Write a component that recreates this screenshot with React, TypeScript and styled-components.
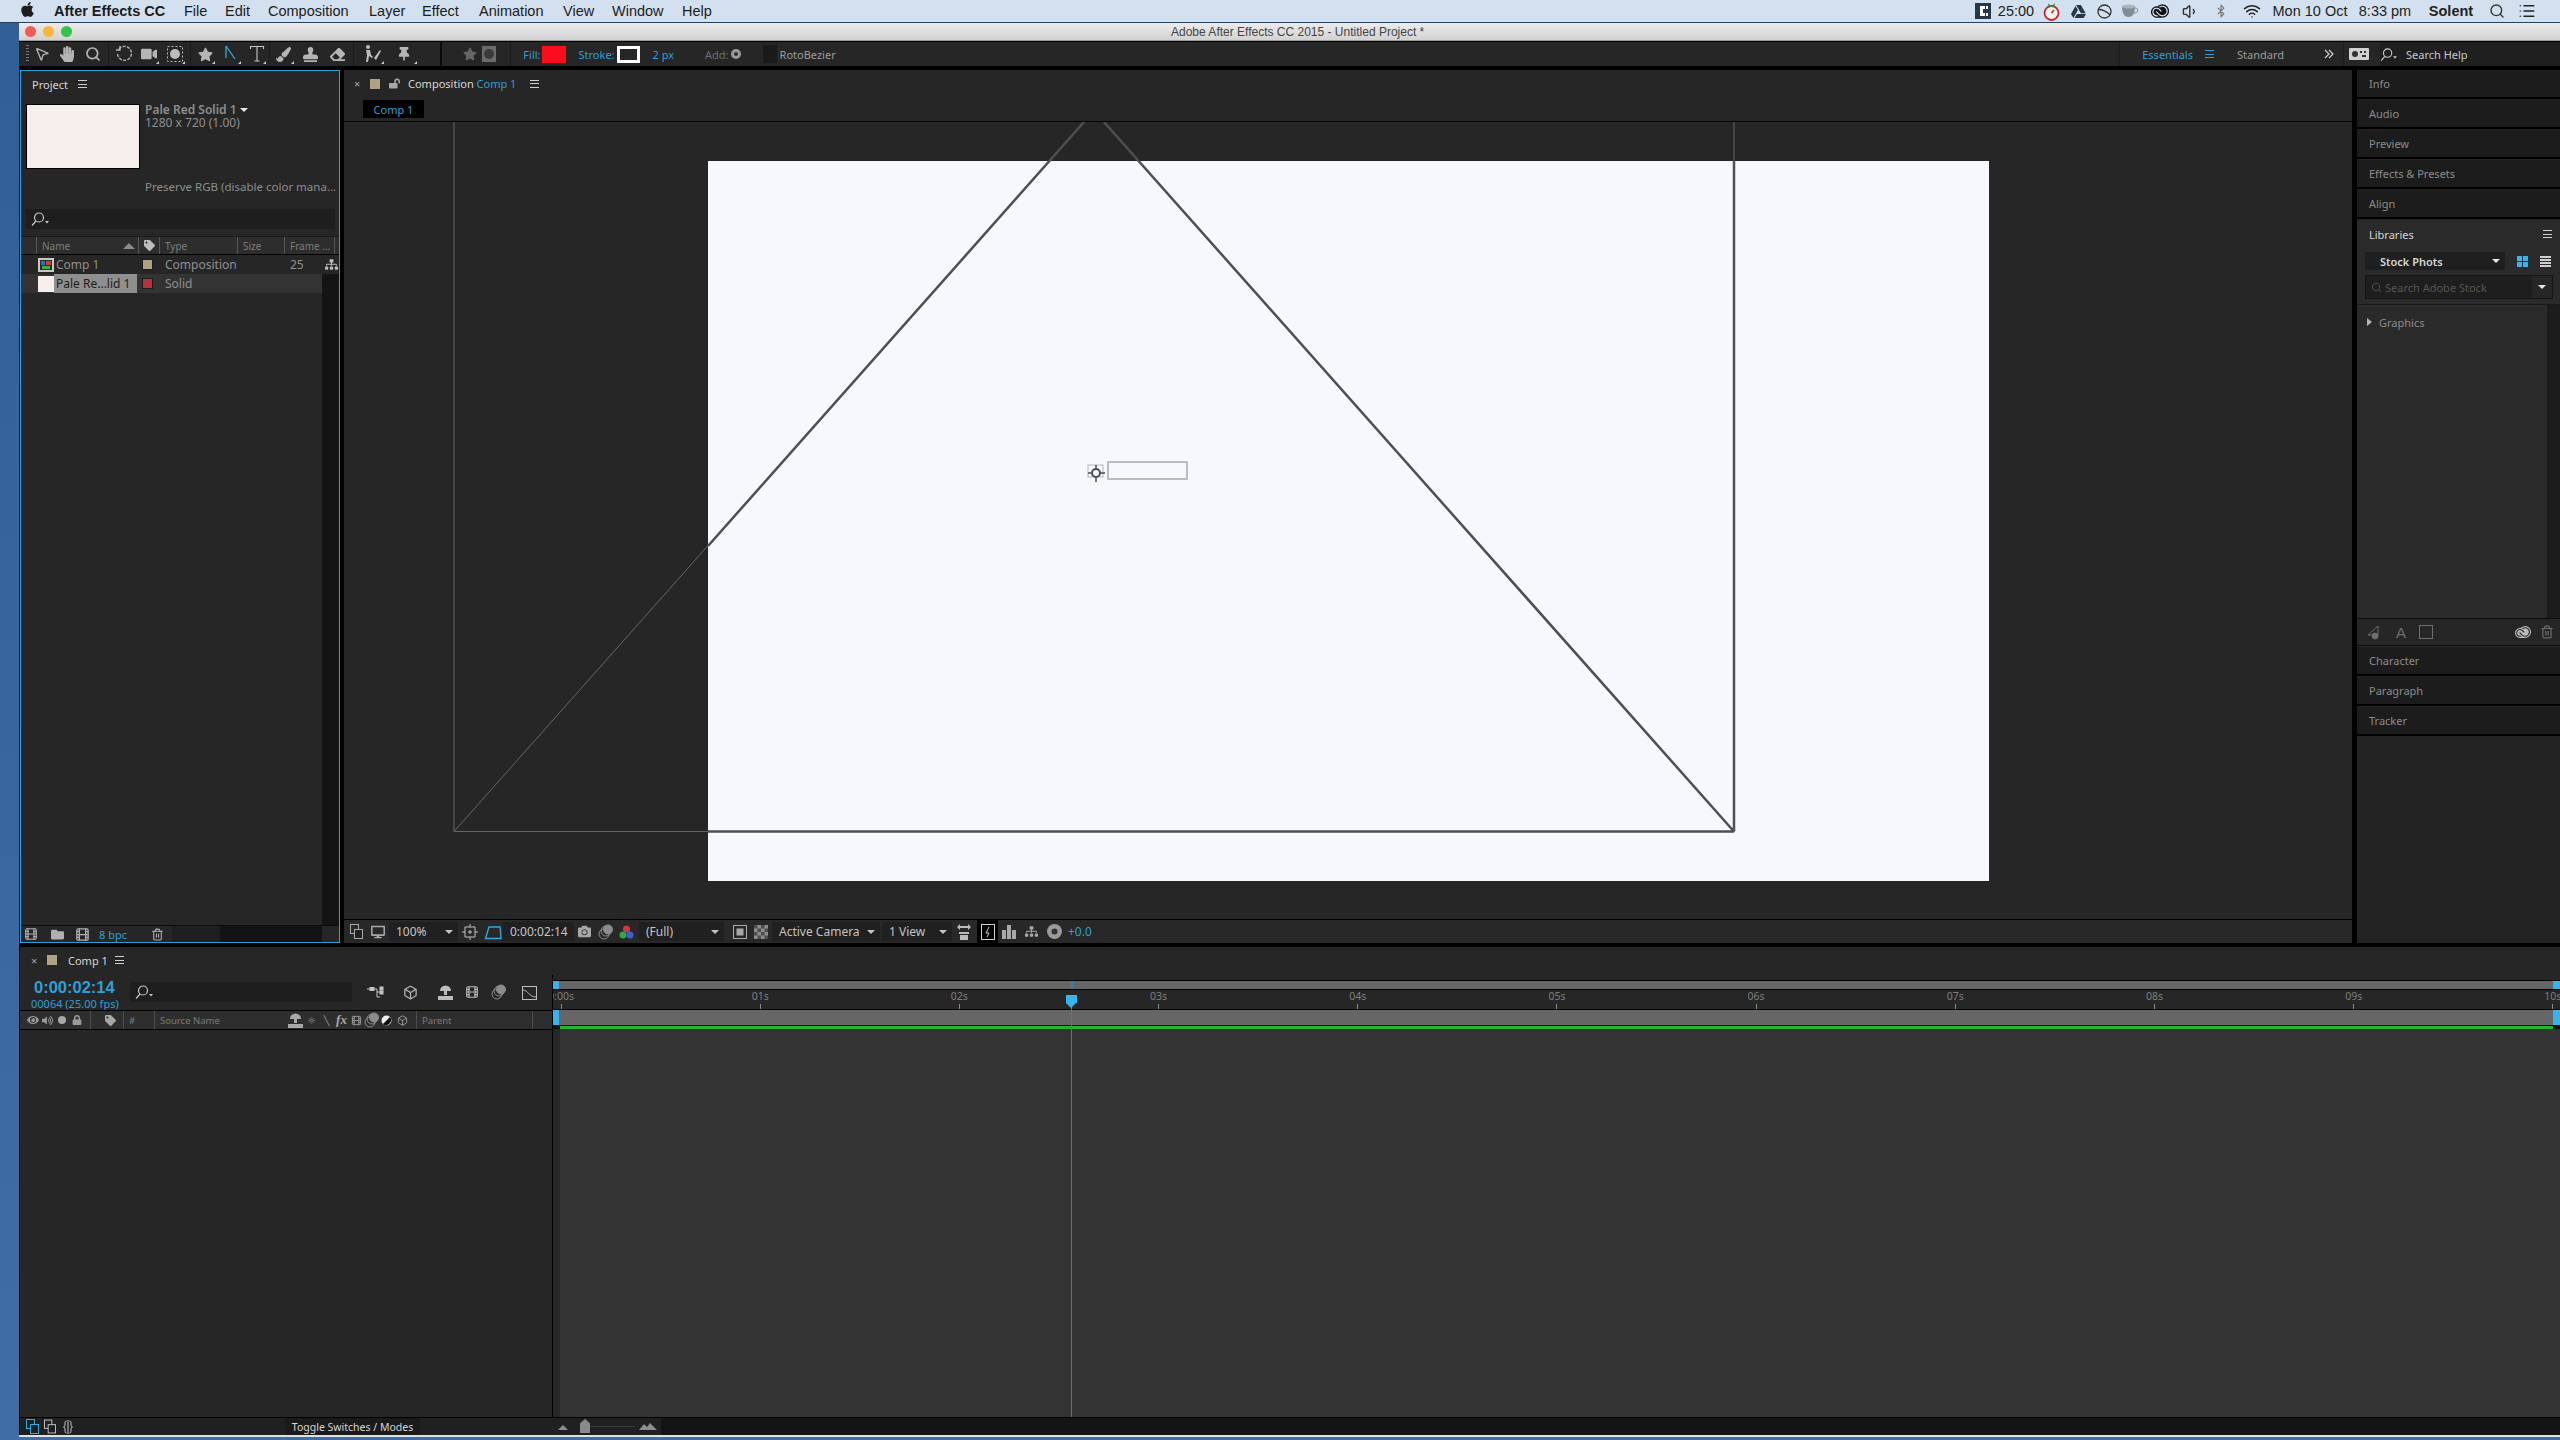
import React from 'react';
import styled, { createGlobalStyle } from 'styled-components';
import { Bluetooth, Box, Film, List, MousePointer2, Search, Trash2, Volume1, Wifi } from 'lucide-react';
import {
  FaApple,
  FaCamera,
  FaDesktop,
  FaEraser,
  FaEye,
  FaFolder,
  FaGoogleDrive,
  FaHandPaper,
  FaLock,
  FaLockOpen,
  FaPaintBrush,
  FaSitemap,
  FaStamp,
  FaStar,
  FaTag,
  FaThumbtack,
  FaVideo,
  FaVolumeUp,
} from 'react-icons/fa';
import { SiAdobecreativecloud } from 'react-icons/si';

const UI = '"Noto Sans", "DejaVu Sans", sans-serif';
const BLUE = '#2f9fd6';

const Global = createGlobalStyle`
  html, body { margin: 0; padding: 0; background: #3d6a9f; }
  * { box-sizing: border-box; }
  #root { width: 2560px; height: 1440px; overflow: hidden; }
`;

const Page = styled.div`
  width: 2560px;
  height: 1440px;
  background: linear-gradient(#2f5f96, #3f6ea6);
  display: flex;
  flex-direction: column;
  font-family: ${UI};
  font-size: 11px;
  color: #8f8f8f;
`;

/* ---- mac menu bar ---- */
const MenuBar = styled.div`
  height: 23px;
  flex: none;
  background: #d3e0ef;
  border-bottom: 1px solid #27415f;
  display: flex;
  align-items: center;
  padding: 0 14px 0 19px;
  font-family: 'Liberation Sans', sans-serif;
  font-size: 14.5px;
  color: #1c1c1c;
`;
const MenuItem = styled.span<{ $w: number; $bold?: boolean }>`
  width: ${(p) => p.$w}px;
  flex: none;
  font-weight: ${(p) => (p.$bold ? 700 : 400)};
  white-space: nowrap;
`;
const MenuSpacer = styled.div`
  flex: 1;
`;
const Extra = styled.span<{ $w: number; $bold?: boolean }>`
  width: ${(p) => p.$w}px;
  flex: none;
  display: flex;
  align-items: center;
  justify-content: center;
  white-space: nowrap;
  font-weight: ${(p) => (p.$bold ? 700 : 400)};
  color: #222;
`;

/* ---- app window ---- */
const AppWindow = styled.div`
  flex: none;
  height: 1414px;
  margin-left: 19px;
  background: #000;
  display: flex;
  flex-direction: column;
  border-bottom: 2px solid #dfe3e8;
`;
const TitleBar = styled.div`
  height: 18px;
  flex: none;
  background: linear-gradient(#ececec, #d2d2d2);
  border-bottom: 1px solid #9a9a9a;
  display: flex;
  align-items: center;
  padding-left: 6px;
  position: relative;
`;
const Light = styled.span<{ $c: string }>`
  width: 11px;
  height: 11px;
  border-radius: 50%;
  background: ${(p) => p.$c};
  margin-right: 7px;
  flex: none;
`;
const WindowTitle = styled.span`
  position: absolute;
  left: 1152px;
  top: 2px;
  font-size: 12px;
  color: #444;
  font-family: 'Liberation Sans', sans-serif;
  white-space: nowrap;
`;

/* ---- tools ---- */
const Toolbar = styled.div`
  height: 24px;
  flex: none;
  margin-top: 1px;
  background: #262626;
  display: flex;
  align-items: center;
  color: #b5b5b5;
`;
const Grip = styled.span`
  width: 3px;
  height: 18px;
  margin: 0 0 0 7px;
  flex: none;
  background: repeating-linear-gradient(#777 0 1px, #262626 1px 3px);
`;
const Tool = styled.span<{ $w?: number; $l?: number; $corner?: boolean; $c?: string }>`
  width: ${(p) => p.$w ?? 25.6}px;
  margin-left: ${(p) => p.$l ?? 0}px;
  height: 22px;
  flex: none;
  display: flex;
  align-items: center;
  justify-content: center;
  position: relative;
  color: ${(p) => p.$c ?? 'inherit'};
  &::after {
    content: '';
    display: ${(p) => (p.$corner ? 'block' : 'none')};
    position: absolute;
    right: 3px;
    bottom: 1px;
    border-left: 3px solid transparent;
    border-bottom: 3px solid #c9c9c9;
  }
`;
const ToolSep = styled.span<{ $ml?: number; $mr?: number; $w?: number; $c?: string }>`
  width: ${(p) => p.$w ?? 1}px;
  height: 100%;
  margin: 0 ${(p) => p.$mr ?? 2}px 0 ${(p) => p.$ml ?? 2}px;
  flex: none;
  background: ${(p) => p.$c ?? '#1b1b1b'};
`;
const Opt = styled.span<{ $l?: number; $c?: string }>`
  margin-left: ${(p) => p.$l ?? 0}px;
  color: ${(p) => p.$c ?? BLUE};
  flex: none;
  white-space: nowrap;
`;
const Swatch = styled.span<{ $l?: number; $w: number; $h: number; $c: string; $ring?: string }>`
  margin-left: ${(p) => p.$l ?? 0}px;
  width: ${(p) => p.$w}px;
  height: ${(p) => p.$h}px;
  flex: none;
  display: block;
  background: ${(p) => p.$c};
  border: ${(p) => (p.$ring ? `3px solid ${p.$ring}` : 'none')};
`;
const Spacer = styled.div`
  flex: 1;
`;
const HelpBox = styled.div`
  width: 180px;
  height: 100%;
  flex: none;
  margin-left: 6px;
  background: #1f1f1f;
  display: flex;
  align-items: center;
  padding-left: 0;
  color: #c9c9c9;
  gap: 9px;
`;

/* ---- main split ---- */
const MainRow = styled.div`
  height: 873px;
  flex: none;
  margin-top: 4px;
  display: flex;
  padding-left: 1px;
`;
const ProjectPanel = styled.section`
  width: 320px;
  flex: none;
  background: #262626;
  border: 1px solid ${BLUE};
  display: flex;
  flex-direction: column;
`;
const PanelHead = styled.div`
  height: 26px;
  flex: none;
  display: flex;
  align-items: center;
  padding-left: 11px;
  gap: 10px;
  color: #d6d6d6;
`;
const Burger = styled.span<{ $c?: string }>`
  width: 9px;
  height: 8px;
  flex: none;
  display: block;
  border-top: 1px solid ${(p) => p.$c ?? '#cfcfcf'};
  border-bottom: 1px solid ${(p) => p.$c ?? '#cfcfcf'};
  background: linear-gradient(${(p) => p.$c ?? '#cfcfcf'}, ${(p) => p.$c ?? '#cfcfcf'}) center / 100% 1px no-repeat;
`;
const ProjectInfo = styled.div`
  height: 112px;
  flex: none;
  padding: 7px 5px 0 5px;
  display: flex;
  gap: 5px;
`;
const Thumb = styled.div`
  width: 114px;
  height: 65px;
  flex: none;
  background: #f6eeec;
  border: 1px solid #000;
`;
const InfoText = styled.div`
  margin-top: -1px;
  display: flex;
  flex-direction: column;
  line-height: 13px;
  white-space: nowrap;
  color: #8e8e8e;
  font-size: 12px;
`;
const InfoName = styled.div`
  display: flex;
  align-items: center;
  gap: 3px;
  font-weight: 600;
  font-size: 12px;
`;
const DownTri = styled.span<{ $s?: number; $c?: string }>`
  flex: none;
  width: 0;
  height: 0;
  border-left: ${(p) => p.$s ?? 4}px solid transparent;
  border-right: ${(p) => p.$s ?? 4}px solid transparent;
  border-top: ${(p) => p.$s ?? 4}px solid ${(p) => p.$c ?? '#e8e8e8'};
`;
const InfoNote = styled.div`
  margin-top: 51px;
  font-size: 11.5px;
`;
const SearchField = styled.div`
  height: 20px;
  margin: 0 4px 0 5px;
  flex: none;
  background: #1e1e1e;
  display: flex;
  align-items: center;
  padding-left: 5px;
  color: #c9c9c9;
`;
const ProjectHeader = styled.div`
  margin-top: 7px;
  height: 19px;
  flex: none;
  background: #2d2d2d;
  border-top: 1px solid #1a1a1a;
  border-bottom: 1px solid #000;
  display: grid;
  grid-template-columns: 15px 102px 21px 78px 47px 50px 1fr;
  align-items: center;
  font-size: 10px;
  color: #7d7d7d;
`;
const HeadCell = styled.span<{ $sep?: boolean }>`
  height: 100%;
  padding-left: 5px;
  display: flex;
  align-items: center;
  justify-content: space-between;
  white-space: nowrap;
  border-left: ${(p) => (p.$sep ? '1px solid #565656' : 'none')};
`;
const UpTri = styled.span`
  width: 0;
  height: 0;
  margin-right: 3px;
  border-left: 6px solid transparent;
  border-right: 6px solid transparent;
  border-bottom: 6px solid #8a8a8a;
`;
const ProjectRow = styled.div<{ $sel?: boolean }>`
  height: 19px;
  flex: none;
  display: grid;
  grid-template-columns: 16px 17px 86px 25px 125px 33px 17px;
  align-items: center;
  font-size: 12px;
  color: #8f8f8f;
  background: linear-gradient(90deg, ${(p) => (p.$sel ? '#333' : '#262626')} 301px, ${(p) => (p.$sel ? '#141414' : '#262626')} 301px);
`;
const RowName = styled.span<{ $sel?: boolean }>`
  height: 100%;
  padding-left: 2px;
  margin-right: 3px;
  display: flex;
  align-items: center;
  white-space: nowrap;
  background: ${(p) => (p.$sel ? '#8f8f8f' : 'transparent')};
  color: ${(p) => (p.$sel ? '#1c1c1c' : '#8f8f8f')};
`;
const RowIcon = styled.span`
  display: flex;
  align-items: center;
  justify-content: center;
`;
const LabelChip = styled.span<{ $c: string }>`
  width: 11px;
  height: 11px;
  display: block;
  margin-left: 2px;
  background: ${(p) => p.$c};
  border: 1px solid #1c1c1c;
`;
const ProjectFill = styled.div`
  flex: 1;
  background: linear-gradient(90deg, #262626 301px, #141414 301px);
`;
const ProjectFoot = styled.div`
  height: 17px;
  flex: none;
  display: flex;
  align-items: center;
  border-top: 1px solid #0c0c0c;
  background: linear-gradient(90deg, #262626 151px, #1f1f1f 151px, #1f1f1f 199px, #131313 199px, #131313 301px, #262626 301px);
  color: #b0b0b0;
`;
const FootTool = styled.span<{ $w: number; $l?: number }>`
  width: ${(p) => p.$w}px;
  margin-left: ${(p) => p.$l ?? 0}px;
  flex: none;
  display: flex;
  align-items: center;
  justify-content: center;
`;

/* ---- composition viewer ---- */
const CompPanel = styled.section`
  flex: 1;
  margin-left: 4px;
  background: #262626;
  display: flex;
  flex-direction: column;
  min-width: 0;
`;
const CompHead = styled.div`
  height: 27px;
  flex: none;
  display: flex;
  align-items: center;
  padding-left: 10px;
  color: #d6d6d6;
`;
const CloseX = styled.span`
  width: 16px;
  flex: none;
  color: #a8a8a8;
  font-size: 11px;
`;
const TabSwatch = styled.span`
  width: 10px;
  height: 10px;
  flex: none;
  background: #b0a284;
`;
const TabRow = styled.div`
  height: 25px;
  flex: none;
  padding-left: 19px;
  border-bottom: 1px solid #000;
  display: flex;
  align-items: flex-start;
  padding-top: 3px;
`;
const ActiveTab = styled.span`
  width: 61px;
  height: 18px;
  background: #000;
  color: ${BLUE};
  display: flex;
  align-items: center;
  justify-content: center;
`;
const Viewer = styled.div`
  height: 797px;
  flex: none;
  position: relative;
  overflow: hidden;
`;
const CompCanvas = styled.div`
  position: absolute;
  left: 364px;
  top: 39px;
  width: 1281px;
  height: 720px;
  background: #f6f8fd;
`;
const Overlay = styled.svg`
  position: absolute;
  left: 0;
  top: 0;
`;
const TextBox = styled.div`
  position: absolute;
  left: 763px;
  top: 339px;
  width: 81px;
  height: 19px;
  border: 2px solid #b9bcc0;
  border-radius: 1px;
`;
const CursorMark = styled.svg`
  position: absolute;
  left: 743px;
  top: 342px;
`;
const ViewerFoot = styled.div`
  flex: 1;
  border-top: 1px solid #000;
  display: flex;
  align-items: center;
  color: #a8a8a8;
  padding-left: 0;
  background: #282828;
  font-size: 12px;
`;
const FootBox = styled.span<{ $w: number; $l?: number }>`
  width: ${(p) => p.$w}px;
  margin-left: ${(p) => p.$l ?? 0}px;
  height: 19px;
  flex: none;
  display: flex;
  align-items: center;
  justify-content: space-between;
  padding: 0 5px 0 7px;
  background: #202020;
  color: #c4c4c4;
  white-space: nowrap;
`;
const FootIcon = styled.span<{ $w: number; $l?: number; $black?: boolean }>`
  width: ${(p) => p.$w}px;
  margin-left: ${(p) => p.$l ?? 0}px;
  height: 100%;
  flex: none;
  display: flex;
  align-items: center;
  justify-content: center;
  background: ${(p) => (p.$black ? '#000' : 'transparent')};
`;

/* ---- right column ---- */
const RightCol = styled.aside`
  width: 203px;
  flex: none;
  margin-left: 5px;
  background: #232323;
  display: flex;
  flex-direction: column;
`;
const Collapsed = styled.div`
  height: 27px;
  margin-bottom: 3px;
  flex: none;
  background: #1c1c1c;
  display: flex;
  align-items: center;
  padding-left: 12px;
  color: #8c8c8c;
  box-shadow: 0 2px 0 #000;
`;
const Libraries = styled.div`
  height: 427px;
  flex: none;
  background: #2a2a2a;
  display: flex;
  flex-direction: column;
`;
const LibHead = styled.div`
  height: 28px;
  flex: none;
  display: flex;
  align-items: center;
  justify-content: space-between;
  padding: 0 8px 0 12px;
  color: #d6d6d6;
`;
const LibSelectRow = styled.div`
  height: 18px;
  margin-top: 4px;
  flex: none;
  display: flex;
  align-items: center;
  padding-left: 8px;
`;
const LibSelect = styled.div`
  width: 140px;
  height: 18px;
  flex: none;
  background: #1f1f1f;
  display: flex;
  align-items: center;
  justify-content: space-between;
  padding: 0 5px 0 15px;
  color: #d8d8d8;
  font-weight: 600;
`;
const GridIcon = styled.span`
  width: 11px;
  height: 11px;
  margin-left: 12px;
  flex: none;
  background:
    linear-gradient(#2a2a2a, #2a2a2a) center / 100% 1px no-repeat,
    linear-gradient(#2a2a2a, #2a2a2a) center / 1px 100% no-repeat,
    #35b4ee;
`;
const LinesIcon = styled.span`
  width: 11px;
  height: 11px;
  margin-left: 12px;
  flex: none;
  background: repeating-linear-gradient(#cfcfcf 0 2px, #2a2a2a 2px 3px);
`;
const StockSearch = styled.div`
  height: 24px;
  margin: 5px 7px 0 8px;
  flex: none;
  background: #1e1e1e;
  border: 1px solid #161616;
  display: flex;
  align-items: center;
  padding-left: 5px;
  gap: 3px;
  color: #555;
`;
const StockArrow = styled.span`
  width: 20px;
  height: 100%;
  margin-left: auto;
  flex: none;
  background: #262626;
  display: flex;
  align-items: center;
  justify-content: center;
`;
const LibBody = styled.div`
  flex: 1;
  margin-top: 5px;
  border-top: 1px solid #191919;
  background: linear-gradient(90deg, #2a2a2a 190px, #1c1c1c 190px);
  padding: 10px 0 0 10px;
  display: flex;
  align-items: flex-start;
  gap: 7px;
  color: #8c8c8c;
`;
const RightTri = styled.span`
  margin-top: 3px;
  width: 0;
  height: 0;
  border-top: 4px solid transparent;
  border-bottom: 4px solid transparent;
  border-left: 5px solid #b5b5b5;
`;
const LibFoot = styled.div`
  height: 28px;
  margin-bottom: 1px;
  flex: none;
  border-top: 1px solid #0d0d0d;
  border-bottom: 1px solid #0d0d0d;
  background: #262626;
  display: flex;
  align-items: center;
  padding-left: 10px;
  color: #6f6f6f;
  gap: 13px;
`;
const LibGlyphA = styled.span`
  font-family: 'Liberation Sans', sans-serif;
  font-size: 15px;
`;
const LibFootRight = styled.span`
  margin-left: auto;
  display: flex;
  align-items: center;
  gap: 9px;
  padding-right: 6px;
  color: #bdbdbd;
`;

/* ---- timeline ---- */
const Timeline = styled.section`
  margin-top: 4px;
  margin-left: 1px;
  height: 488px;
  flex: none;
  background: #262626;
  position: relative;
  display: flex;
  flex-direction: column;
  overflow: hidden;
`;
const TimelineTab = styled.div`
  height: 28px;
  flex: none;
  display: flex;
  align-items: center;
  padding: 0 0 2px 11px;
  color: #d6d6d6;
`;
const TimelineBody = styled.div`
  flex: 1;
  display: grid;
  grid-template-columns: 533px 1fr;
  min-height: 0;
`;
const LeftPane = styled.div`
  display: flex;
  flex-direction: column;
  border-right: 1px solid #000;
`;
const ControlRow = styled.div`
  height: 35px;
  flex: none;
  display: flex;
  align-items: flex-start;
`;
const TimeBlock = styled.div`
  width: 110px;
  flex: none;
  padding: 4px 0 0 11px;
  color: ${BLUE};
  line-height: 1;
  white-space: nowrap;
`;
const TimeCode = styled.div`
  font-size: 16.5px;
  font-weight: 700;
  font-family: 'Liberation Sans', sans-serif;
  padding-left: 3px;
`;
const Frames = styled.div`
  font-size: 11px;
  margin-top: 2px;
`;
const TimelineSearch = styled(SearchField)`
  width: 222px;
  margin: 7px 0 0 0;
`;
const CtlIcons = styled.div`
  display: flex;
  margin-left: 8px;
  margin-top: 7px;
  height: 20px;
  align-items: center;
  color: #b5b5b5;
`;
const LayerHeader = styled.div`
  height: 20px;
  flex: none;
  display: flex;
  align-items: center;
  background: #2e2e2e;
  border-top: 1px solid #000;
  border-bottom: 1px solid #000;
  font-size: 9.5px;
  color: #7a7a7a;
`;
const HIcon = styled.span<{ $w: number; $l?: number; $c?: string }>`
  width: ${(p) => p.$w}px;
  margin-left: ${(p) => p.$l ?? 0}px;
  flex: none;
  display: flex;
  align-items: center;
  justify-content: center;
  color: ${(p) => p.$c ?? '#9a9a9a'};
`;
const HLabel = styled.span<{ $w: number; $pad?: number }>`
  width: ${(p) => p.$w}px;
  height: 100%;
  flex: none;
  display: flex;
  align-items: center;
  padding-left: ${(p) => p.$pad ?? 5}px;
  border-left: 1px solid #4d4d4d;
  white-space: nowrap;
`;
const FxMark = styled.span`
  font-family: 'Liberation Serif', serif;
  font-style: italic;
  font-weight: 700;
  font-size: 13px;
  color: #a8a8a8;
`;
const LayerPad = styled.div`
  flex: 1;
`;
const RightPane = styled.div`
  display: flex;
  flex-direction: column;
  position: relative;
  min-width: 0;
`;
const WorkBar = styled.div`
  height: 10px;
  margin-top: 5px;
  flex: none;
  background: linear-gradient(90deg, #35b4ee 0 6px, #666 6px, #666 calc(100% - 7px), #35b4ee calc(100% - 7px));
  border-top: 1px solid #000;
  border-bottom: 1px solid #000;
`;
const Ruler = styled.div`
  height: 19px;
  flex: none;
  padding: 0 7px 0 8px;
  display: flex;
  justify-content: space-between;
  overflow: hidden;
  color: #7f7f7f;
  font-size: 10.5px;
`;
const Tick = styled.span`
  width: 0;
  height: 100%;
  flex: none;
  display: flex;
  flex-direction: column;
  align-items: center;
  justify-content: space-between;
  white-space: nowrap;
  line-height: 13px;
  &::after {
    content: '';
    width: 1px;
    height: 5px;
    flex: none;
    background: #8a8a8a;
  }
`;
const LayerBar = styled.div`
  height: 20px;
  flex: none;
  border-top: 1px solid #000;
  background:
    linear-gradient(#1fb62f, #1fb62f) 7px 100% / calc(100% - 14px) 3px no-repeat,
    linear-gradient(#35b4ee, #35b4ee) 0 0 / 6px 15px no-repeat,
    linear-gradient(#35b4ee, #35b4ee) 100% 0 / 7px 15px no-repeat,
    linear-gradient(#666, #666) 0 0 / 100% 15px no-repeat,
    #111;
`;
const TrackArea = styled.div`
  flex: 1;
  margin-left: 7px;
  background: #333;
`;
const Playhead = styled.div`
  position: absolute;
  left: 518px;
  top: 20px;
  bottom: 0;
  width: 1px;
  background: #2b86b8;
  &::before {
    content: '';
    position: absolute;
    left: -5px;
    top: 0;
    width: 11px;
    height: 8px;
    background: #35b4ee;
  }
  &::after {
    content: '';
    position: absolute;
    left: -5px;
    top: 8px;
    border-left: 5.5px solid transparent;
    border-right: 5.5px solid transparent;
    border-top: 5px solid #35b4ee;
  }
`;
const WorkTick = styled.div`
  position: absolute;
  left: 518px;
  top: 6px;
  width: 2px;
  height: 8px;
  background: #2b86b8;
`;
const TimelineFoot = styled.div`
  height: 18px;
  flex: none;
  border-top: 1px solid #000;
  background: #202020;
  display: flex;
  align-items: center;
  color: #c9c9c9;
`;
const ToggleLabel = styled.span`
  width: 135px;
  height: 100%;
  margin-left: 205px;
  flex: none;
  background: #1a1a1a;
  color: #d6d6d6;
  display: flex;
  align-items: center;
  justify-content: center;
  white-space: nowrap;
  font-size: 10.5px;
`;
const ZoomTrack = styled.span`
  width: 55px;
  height: 1px;
  margin-left: 7px;
  flex: none;
  background: #3a3a3a;
  position: relative;
`;
const ZoomKnob = styled.span`
  position: absolute;
  left: 0;
  top: -7px;
  width: 10px;
  height: 14px;
  background: #8a8a8a;
  clip-path: polygon(50% 0, 100% 30%, 100% 100%, 0 100%, 0 30%);
`;
const MountainFill = styled.span`
  flex: 1;
  height: 100%;
  background: #141414;
`;

/* ---- drawn icons ---- */
const Pen = () => (
  <svg width="14" height="18" viewBox="0 0 14 18" fill="none" stroke="#35a9e0" strokeWidth="1.3">
    <path d="M2 1v12M2 1l9 13" />
  </svg>
);
const RotateTool = () => (
  <svg width="18" height="18" viewBox="0 0 18 18" fill="none" stroke="#bcbcbc" strokeWidth="1.3">
    <path d="M4 4a7 7 0 1 1-1.5 5" strokeDasharray="3 1.4" />
    <path d="M5 1v4H1" />
  </svg>
);
const PanBehind = () => (
  <svg width="18" height="18" viewBox="0 0 18 18" fill="none" stroke="#bcbcbc">
    <rect x="1.5" y="1.5" width="15" height="15" strokeDasharray="2 2" />
    <circle cx="9" cy="9" r="5" fill="#bcbcbc" stroke="none" />
  </svg>
);
const TypeTool = () => (
  <svg width="16" height="18" viewBox="0 0 16 18" fill="none" stroke="#c6c6c6" strokeWidth="1.1">
    <path d="M1.5 4V1.5h13V4M8 1.5V16M5.5 16h5" />
  </svg>
);
const RotoTool = () => (
  <svg width="20" height="20" viewBox="0 0 20 20" fill="#bdbdbd">
    <circle cx="6" cy="3" r="2" />
    <path d="M4 6h4l1 5 2 2-1 1-3-2-1 6H4l1-7zM12 14l6-8 1 1-5 9z" />
  </svg>
);
const StarGrid = () => (
  <svg width="14" height="16" viewBox="0 0 14 16">
    <rect width="14" height="16" fill="#6b6b6b" />
    <circle cx="7" cy="8" r="5" fill="#3a3a3a" />
  </svg>
);
const RgbDots = () => (
  <svg width="15" height="14" viewBox="0 0 15 14">
    <circle cx="7.5" cy="4" r="3.5" fill="#d13a3a" />
    <circle cx="4" cy="10" r="3.5" fill="#2fa84a" />
    <circle cx="11" cy="10" r="3.5" fill="#3a62d8" />
  </svg>
);
const Checker = () => (
  <svg width="14" height="14" viewBox="0 0 14 14">
    <rect width="14" height="14" fill="#8c8c8c" />
    <path d="M0 0h3.5v3.5H0zM7 0h3.5v3.5H7zM3.5 3.5H7V7H3.5zM10.5 3.5H14V7h-3.5zM0 7h3.5v3.5H0zM7 7h3.5v3.5H7zM3.5 10.5H7V14H3.5zM10.5 10.5H14V14h-3.5z" fill="#4e4e4e" />
  </svg>
);
const OutlineSquare = ({ s = 14, c = '#a8a8a8', inner }: { s?: number; c?: string; inner?: boolean }) => (
  <svg width={s} height={s} viewBox="0 0 14 14" fill="none" stroke={c}>
    <rect x="0.5" y="0.5" width="13" height="13" />
    {inner && <rect x="4" y="4" width="6" height="6" fill={c} />}
  </svg>
);
const DashedFrame = ({ c = '#c2c2c2' }: { c?: string }) => (
  <svg width="16" height="16" viewBox="0 0 16 16" fill="none" stroke={c}>
    <path d="M3 3h10v10H3z" />
    <path d="M8 0v3M8 13v3M0 8h3M13 8h3M6 8h4M8 6v4" />
  </svg>
);
const Mask = () => (
  <svg width="18" height="16" viewBox="0 0 18 16" fill="none" stroke="#35a9e0" strokeWidth="1.3">
    <path d="M1.5 14.5 5 3h11l1 11.5z" />
  </svg>
);
const Aperture = ({ s = 15 }: { s?: number }) => (
  <svg width={s} height={s} viewBox="0 0 15 15">
    <circle cx="7.5" cy="7.5" r="7.5" fill="#9a9a9a" />
    <circle cx="7.5" cy="7.5" r="3" fill="#333" />
  </svg>
);
const Lightning = () => (
  <svg width="14" height="16" viewBox="0 0 14 16" fill="none" stroke="#cfcfcf">
    <rect x="0.5" y="0.5" width="13" height="15" />
    <path d="M8 3 5 9h3l-2 4" />
  </svg>
);
const ExposureBars = () => (
  <svg width="14" height="14" viewBox="0 0 14 14" fill="#a8a8a8">
    <path d="M0 5h4v9H0zM5 0h4v14H5zM10 5h4v9h-4z" />
  </svg>
);
const FitArrows = () => (
  <svg width="14" height="16" viewBox="0 0 14 16" fill="#bcbcbc">
    <path d="M0 3 3 0v2h8V0l3 3-3 3V4H3v2zM2 8h10v2H2zM3 11h8v5H3z" />
  </svg>
);
const CompIcon = () => (
  <svg width="16" height="14" viewBox="0 0 16 14">
    <rect width="16" height="14" fill="#c7c7c7" />
    <rect x="2" y="2" width="12" height="10" fill="#2b2b2b" />
    <rect x="3" y="3" width="4" height="4" fill="#2b6fc4" />
    <rect x="8" y="3" width="5" height="4" fill="#c4472b" />
    <rect x="4" y="8" width="8" height="3" fill="#3cae4a" />
  </svg>
);
const LensMag = ({ s = 14, c = '#c9c9c9' }: { s?: number; c?: string }) => (
  <svg width={s + 4} height={s} viewBox="0 0 18 14" fill="none" stroke={c} strokeWidth="1.2">
    <circle cx="8" cy="5.5" r="4.5" />
    <path d="M5 9 1 13.5" />
    <path d="M14 9h4l-2 2.5z" fill={c} stroke="none" />
  </svg>
);
const Tomato = () => (
  <svg width="17" height="19" viewBox="0 0 17 19" fill="none">
    <circle cx="8.5" cy="11" r="7" stroke="#c8262c" strokeWidth="1.8" fill="#f2f2f2" />
    <path d="M8.5 11 11 8" stroke="#c8262c" strokeWidth="1.5" />
    <path d="M5 1.5 8.5 4 12 1l-1 4H6z" fill="#2c8a3c" />
  </svg>
);
const CIcon = () => (
  <svg width="16" height="16" viewBox="0 0 16 16">
    <rect width="16" height="16" fill="#26374a" />
    <path d="M10 3H5v10h5v-3H8V6h2zM11 3h2v3h-2zM11 10h2v3h-2z" fill="#fff" />
  </svg>
);
const RingCircle = () => (
  <svg width="15" height="15" viewBox="0 0 15 15" fill="none" stroke="#333">
    <circle cx="7.5" cy="7.5" r="6.5" strokeWidth="1.3" />
    <path d="M1.5 5.5c4 0 8 2 12 5.5" strokeWidth="1.3" />
  </svg>
);
const Cup = () => (
  <svg width="19" height="14" viewBox="0 0 19 14">
    <path d="M1 2h13c0 7-2 11-6.5 11S1 9 1 2z" fill="#808b96" />
    <ellipse cx="7.5" cy="2.5" rx="6.5" ry="2" fill="#abb5bf" />
    <path d="M14 4c4 0 4 5-1 5" fill="none" stroke="#808b96" />
  </svg>
);
const ShapeTriangle = () => (
  <svg width="16" height="15" viewBox="0 0 16 15" fill="none" stroke="#6f6f6f">
    <path d="M1 10 11 1v9z" />
    <circle cx="8" cy="11" r="3" fill="#6f6f6f" />
  </svg>
);
const Layers = ({ c = '#35a9e0' }: { c?: string }) => (
  <svg width="13" height="15" viewBox="0 0 13 15" fill="none" stroke={c}>
    <rect x="0.5" y="0.5" width="8" height="9" />
    <rect x="4.5" y="5.5" width="8" height="9" fill="#202020" />
  </svg>
);
const FlowIcon = () => (
  <svg width="17" height="13" viewBox="0 0 17 13" fill="none" stroke="#c4c4c4">
    <path d="M0 3h7M7 3h3v8h3M10 6h3" />
    <rect x="3" y="1.5" width="4" height="3" fill="#c4c4c4" />
    <rect x="13" y="1" width="3" height="3" fill="#c4c4c4" />
    <rect x="13" y="5" width="3" height="3" fill="#c4c4c4" />
  </svg>
);
const Shy = ({ s = 15, c = '#a8a8a8' }: { s?: number; c?: string }) => (
  <svg width={s} height={s} viewBox="0 0 15 15" fill={c}>
    <path d="M2 6a5.5 5.5 0 0 1 11 0H9v4H6V6zM0 11h15v4H0z" />
  </svg>
);
const Curve = () => (
  <svg width="15" height="15" viewBox="0 0 15 15" fill="none" stroke="#bcbcbc">
    <rect x="0.5" y="1.5" width="14" height="13" />
    <path d="M1 5c5 0 6 7 13 7" />
  </svg>
);
const Spheres = () => (
  <svg width="15" height="16" viewBox="0 0 15 16" fill="none" stroke="#8c8c8c">
    <circle cx="6" cy="10" r="5" />
    <circle cx="8" cy="7" r="5" />
    <circle cx="10" cy="5.5" r="4.5" fill="#8c8c8c" />
  </svg>
);
const ContrastCircle = () => (
  <svg width="11" height="11" viewBox="0 0 11 11">
    <circle cx="5.5" cy="5.5" r="5" fill="#eee" />
    <path d="M9 2a5 5 0 0 1-7 7z" fill="#111" />
  </svg>
);
const SoloDot = () => (
  <svg width="8" height="8" viewBox="0 0 8 8">
    <circle cx="4" cy="4" r="4" fill="#a8a8a8" />
  </svg>
);
const Keyboard = () => (
  <svg width="20" height="12" viewBox="0 0 20 12">
    <rect width="20" height="12" rx="1" fill="#d0d0d0" />
    <circle cx="6" cy="6" r="3" fill="#333" />
    <path d="M11 3h2v2h-2zM15 3h2v2h-2zM13 7h4v2h-4z" fill="#333" />
  </svg>
);
const DoubleChevron = () => (
  <svg width="10" height="10" viewBox="0 0 10 10" fill="none" stroke="#d0d0d0" strokeWidth="1.2">
    <path d="M1 1l4 4-4 4M5 1l4 4-4 4" />
  </svg>
);
const BracketSplit = () => (
  <svg width="10" height="14" viewBox="0 0 10 14" fill="none" stroke="#c9c9c9">
    <path d="M3.5 1C2 1 2 2 2 4s0 2.500-1.500 3C2 7.500 2 8 2 10s0 3 1.500 3M6.500 1C8 1 8 2 8 4s0 2.500 1.500 3C8 7.500 8 8 8 10s0 3-1.500 3M5 0v14" />
  </svg>
);
const Mountains = ({ big }: { big?: boolean }) => (
  <svg width={big ? 18 : 10} height="7" viewBox={big ? '0 0 18 7' : '0 0 10 7'} fill="#8d8d8d">
    {big ? <path d="M0 7 5 1l3 3 3-4 7 7z" /> : <path d="M0 7 5 2l5 5z" />}
  </svg>
);

const SmallBurger = () => <Burger />;

const App = () => {
  const ticks = ['0:00s', '01s', '02s', '03s', '04s', '05s', '06s', '07s', '08s', '09s', '10s'];
  return (
    <Page>
      <Global />
      <MenuBar>
        <MenuItem $w={35}>
          <FaApple size={17} />
        </MenuItem>
        <MenuItem $w={130} $bold>After Effects CC</MenuItem>
        <MenuItem $w={41}>File</MenuItem>
        <MenuItem $w={43}>Edit</MenuItem>
        <MenuItem $w={101}>Composition</MenuItem>
        <MenuItem $w={53}>Layer</MenuItem>
        <MenuItem $w={57}>Effect</MenuItem>
        <MenuItem $w={84}>Animation</MenuItem>
        <MenuItem $w={49}>View</MenuItem>
        <MenuItem $w={70}>Window</MenuItem>
        <MenuItem $w={40}>Help</MenuItem>
        <MenuSpacer />
        <Extra $w={22}><CIcon /></Extra>
        <Extra $w={44}>25:00</Extra>
        <Extra $w={26}><Tomato /></Extra>
        <Extra $w={28}><FaGoogleDrive size={15} color="#26374a" /></Extra>
        <Extra $w={24}><RingCircle /></Extra>
        <Extra $w={28}><Cup /></Extra>
        <Extra $w={32}><SiAdobecreativecloud size={18} color="#111" /></Extra>
        <Extra $w={28}><Volume1 size={17} color="#333" /></Extra>
        <Extra $w={34}><Bluetooth size={14} color="#777" /></Extra>
        <Extra $w={28}><Wifi size={18} color="#222" /></Extra>
        <Extra $w={88}>Mon 10 Oct</Extra>
        <Extra $w={62}>8:33 pm</Extra>
        <Extra $w={70} $bold>Solent</Extra>
        <Extra $w={22}><Search size={16} color="#333" /></Extra>
        <Extra $w={38}><List size={18} color="#222" /></Extra>
      </MenuBar>

      <AppWindow>
        <TitleBar>
          <Light $c="#f25c55" />
          <Light $c="#f6b73c" />
          <Light $c="#36c24c" />
          <WindowTitle>Adobe After Effects CC 2015 - Untitled Project *</WindowTitle>
        </TitleBar>

        <Toolbar>
          <Grip />
          <Tool><MousePointer2 size={16} /></Tool>
          <Tool><FaHandPaper size={16} /></Tool>
          <Tool><Search size={16} strokeWidth={2.6} /></Tool>
          <ToolSep />
          <Tool><RotateTool /></Tool>
          <Tool $corner><FaVideo size={16} /></Tool>
          <Tool $corner><PanBehind /></Tool>
          <ToolSep />
          <Tool $corner><FaStar size={15} /></Tool>
          <Tool $corner><Pen /></Tool>
          <Tool $corner><TypeTool /></Tool>
          <ToolSep $ml={0} $mr={0} />
          <Tool $w={27} $corner><FaPaintBrush size={15} /></Tool>
          <Tool $w={27}><FaStamp size={15} /></Tool>
          <Tool $w={27}><FaEraser size={15} /></Tool>
          <ToolSep />
          <Tool $w={31} $corner><RotoTool /></Tool>
          <Tool $w={33} $corner><FaThumbtack size={14} /></Tool>
          <ToolSep $ml={20} $mr={18} $w={2} $c="#0a0a0a" />
          <Tool $w={20}><FaStar size={14} color="#666" /></Tool>
          <Tool $w={18}><StarGrid /></Tool>
          <ToolSep $ml={12} $mr={12} />
          <Opt>Fill:</Opt>
          <Swatch $l={1} $w={24} $h={17} $c="#fc0d1b" />
          <Opt $l={13}>Stroke:</Opt>
          <Swatch $l={2} $w={23} $h={17} $c="#262626" $ring="#fff" />
          <Opt $l={13}>2 px</Opt>
          <Opt $l={31} $c="#6e6e6e">Add:</Opt>
          <Tool $w={14} $c="#6e6e6e"><Aperture s={10} /></Tool>
          <Swatch $l={20} $w={14} $h={18} $c="#1a1a1a" />
          <Opt $l={3} $c="#9c9c9c">RotoBezier</Opt>
          <Spacer />
          <ToolSep $ml={0} $mr={0} />
          <Opt $l={22}>Essentials</Opt>
          <Tool $w={34}><Burger $c={BLUE} /></Tool>
          <Opt $l={10} $c="#9c9c9c">Standard</Opt>
          <Tool $l={31} $w={28}><DoubleChevron /></Tool>
          <ToolSep $ml={0} $mr={0} />
          <Tool $w={30}><Keyboard /></Tool>
          <HelpBox>
            <LensMag s={13} />
            <span>Search Help</span>
          </HelpBox>
        </Toolbar>

        <MainRow>
          <ProjectPanel>
            <PanelHead>
              Project
              <SmallBurger />
            </PanelHead>
            <ProjectInfo>
              <Thumb />
              <InfoText>
                <InfoName>
                  Pale Red Solid 1
                  <DownTri />
                </InfoName>
                <span>1280 x 720 (1.00)</span>
                <InfoNote>Preserve RGB (disable color mana...</InfoNote>
              </InfoText>
            </ProjectInfo>
            <SearchField>
              <LensMag />
            </SearchField>
            <ProjectHeader>
              <span />
              <HeadCell $sep>
                Name
                <UpTri />
              </HeadCell>
              <HeadCell $sep><FaTag size={11} color="#bdbdbd" /></HeadCell>
              <HeadCell $sep>Type</HeadCell>
              <HeadCell $sep>Size</HeadCell>
              <HeadCell $sep>Frame ...</HeadCell>
              <HeadCell $sep />
            </ProjectHeader>
            <ProjectRow>
              <span />
              <RowIcon><CompIcon /></RowIcon>
              <RowName>Comp 1</RowName>
              <LabelChip $c="#b0a284" />
              <span>Composition</span>
              <span>25</span>
              <RowIcon><FaSitemap size={13} color="#bdbdbd" /></RowIcon>
            </ProjectRow>
            <ProjectRow $sel>
              <span />
              <RowIcon><Swatch $w={16} $h={16} $c="#f6eeec" /></RowIcon>
              <RowName $sel>Pale Re...lid 1</RowName>
              <LabelChip $c="#b5333a" />
              <span>Solid</span>
            </ProjectRow>
            <ProjectFill />
            <ProjectFoot>
              <FootTool $w={20}><Film size={14} /></FootTool>
              <FootTool $w={32}><FaFolder size={13} /></FootTool>
              <FootTool $w={18}><Film size={15} /></FootTool>
              <Opt $l={8} $c={BLUE}>8 bpc</Opt>
              <FootTool $w={62}><Trash2 size={13} /></FootTool>
            </ProjectFoot>
          </ProjectPanel>

          <CompPanel>
            <CompHead>
              <CloseX>×</CloseX>
              <TabSwatch />
              <FootTool $w={28}><FaLockOpen size={11} color="#a8a8a8" /></FootTool>
              Composition&nbsp;<Opt>Comp 1</Opt>
              <FootTool $w={36}><SmallBurger /></FootTool>
            </CompHead>
            <TabRow>
              <ActiveTab>Comp 1</ActiveTab>
            </TabRow>
            <Viewer>
              <CompCanvas />
              <Overlay width="2008" height="797" viewBox="0 0 2008 797" fill="none">
                <path d="M110 0V709.5H1390V0M110 709.500 750 -11 1390 709.500" stroke="#666" strokeWidth="1" />
                <path d="M364 709.500H1390M364 424 740 0M760 0 1390 709.500M1390 39V709.500" stroke="#4f4f4f" strokeWidth="2.500" />
              </Overlay>
              <TextBox />
              <CursorMark width="18" height="18" viewBox="0 0 18 18" fill="none" stroke="#4c4c4c">
                <rect x="1" y="1" width="15" height="12" stroke="#b5b7ba" />
                <circle cx="9" cy="9" r="4" strokeWidth="2" />
                <path d="M9 1v3M9 14v4M1 9h3M14 9h4" strokeWidth="1.500" />
              </CursorMark>
            </Viewer>
            <ViewerFoot>
              <FootIcon $w={24}><Layers c="#a8a8a8" /></FootIcon>
              <FootIcon $w={20}><FaDesktop size={14} /></FootIcon>
              <FootBox $l={1} $w={69}>100%<DownTri $c="#c4c4c4" /></FootBox>
              <FootIcon $w={24}><DashedFrame /></FootIcon>
              <FootIcon $w={21}><Mask /></FootIcon>
              <FootBox $w={71}>0:00:02:14</FootBox>
              <FootIcon $w={20}><FaCamera size={13} /></FootIcon>
              <FootIcon $w={22}><Spheres /></FootIcon>
              <FootIcon $w={21}><RgbDots /></FootIcon>
              <FootBox $l={2} $w={85}>(Full)<DownTri $c="#c4c4c4" /></FootBox>
              <FootIcon $l={6} $w={20}><OutlineSquare inner /></FootIcon>
              <FootIcon $w={21}><Checker /></FootIcon>
              <FootBox $l={1} $w={108}>Active Camera<DownTri $c="#c4c4c4" /></FootBox>
              <FootBox $l={2} $w={70}>1 View<DownTri $c="#c4c4c4" /></FootBox>
              <FootIcon $w={24}><FitArrows /></FootIcon>
              <FootIcon $l={1} $w={21} $black><Lightning /></FootIcon>
              <FootIcon $w={22}><ExposureBars /></FootIcon>
              <FootIcon $w={22}><FaSitemap size={13} /></FootIcon>
              <FootIcon $w={24}><Aperture /></FootIcon>
              <Opt $l={2}>+0.0</Opt>
            </ViewerFoot>
          </CompPanel>

          <RightCol>
            <Collapsed>Info</Collapsed>
            <Collapsed>Audio</Collapsed>
            <Collapsed>Preview</Collapsed>
            <Collapsed>Effects &amp; Presets</Collapsed>
            <Collapsed>Align</Collapsed>
            <Libraries>
              <LibHead>
                Libraries
                <SmallBurger />
              </LibHead>
              <LibSelectRow>
                <LibSelect>Stock Phots<DownTri $s={4.5} /></LibSelect>
                <GridIcon />
                <LinesIcon />
              </LibSelectRow>
              <StockSearch>
                <Search size={11} />
                Search Adobe Stock
                <StockArrow><DownTri /></StockArrow>
              </StockSearch>
              <LibBody>
                <RightTri />
                Graphics
              </LibBody>
              <LibFoot>
                <ShapeTriangle />
                <LibGlyphA>A</LibGlyphA>
                <OutlineSquare c="#6f6f6f" />
                <LibFootRight>
                  <SiAdobecreativecloud size={16} />
                  <Trash2 size={14} color="#6f6f6f" />
                </LibFootRight>
              </LibFoot>
            </Libraries>
            <Collapsed>Character</Collapsed>
            <Collapsed>Paragraph</Collapsed>
            <Collapsed>Tracker</Collapsed>
          </RightCol>
        </MainRow>

        <Timeline>
          <TimelineTab>
            <CloseX>×</CloseX>
            <TabSwatch />
            <FootTool $w={11} />
            Comp 1
            <FootTool $w={24}><SmallBurger /></FootTool>
          </TimelineTab>
          <TimelineBody>
            <LeftPane>
              <ControlRow>
                <TimeBlock>
                  <TimeCode>0:00:02:14</TimeCode>
                  <Frames>00064 (25.00 fps)</Frames>
                </TimeBlock>
                <TimelineSearch>
                  <LensMag />
                </TimelineSearch>
                <CtlIcons>
                  <FootTool $w={30}><FlowIcon /></FootTool>
                  <FootTool $w={40}><Box size={15} /></FootTool>
                  <FootTool $w={30}><Shy size={14} c="#bdbdbd" /></FootTool>
                  <FootTool $w={24}><Film size={14} /></FootTool>
                  <FootTool $w={28}><Spheres /></FootTool>
                  <FootTool $w={34}><Curve /></FootTool>
                </CtlIcons>
              </ControlRow>
              <LayerHeader>
                <HIcon $w={14} $l={6}><FaEye size={12} /></HIcon>
                <HIcon $w={14}><FaVolumeUp size={11} /></HIcon>
                <HIcon $w={16}><SoloDot /></HIcon>
                <HIcon $w={14}><FaLock size={10} /></HIcon>
                <HIcon $w={6} />
                <HLabel $w={33} $pad={14}><FaTag size={11} color="#a8a8a8" /></HLabel>
                <HLabel $w={31}>#</HLabel>
                <HLabel $w={132}>Source Name</HLabel>
                <HIcon $w={18}><Shy size={11} /></HIcon>
                <HIcon $w={15}>☼</HIcon>
                <HIcon $w={15}>╲</HIcon>
                <HIcon $w={15}><FxMark>fx</FxMark></HIcon>
                <HIcon $w={15}><Film size={11} /></HIcon>
                <HIcon $w={15}><Spheres /></HIcon>
                <HIcon $w={15}><ContrastCircle /></HIcon>
                <HIcon $w={16}><Box size={11} /></HIcon>
                <HIcon $w={6} />
                <HLabel $w={116}>Parent</HLabel>
                <HLabel $w={16} />
              </LayerHeader>
              <LayerPad />
            </LeftPane>
            <RightPane>
              <WorkBar />
              <WorkTick />
              <Ruler>
                {ticks.map((t) => (
                  <Tick key={t}>{t}</Tick>
                ))}
              </Ruler>
              <LayerBar />
              <TrackArea />
              <Playhead />
            </RightPane>
          </TimelineBody>
          <TimelineFoot>
            <FootTool $w={24}><Layers /></FootTool>
            <FootTool $w={12}><Layers c="#c9c9c9" /></FootTool>
            <FootTool $w={24}><BracketSplit /></FootTool>
            <ToggleLabel>Toggle Switches / Modes</ToggleLabel>
            <FootTool $l={133} $w={20}><Mountains /></FootTool>
            <ZoomTrack>
              <ZoomKnob />
            </ZoomTrack>
            <FootTool $w={26}><Mountains big /></FootTool>
            <MountainFill />
          </TimelineFoot>
        </Timeline>
      </AppWindow>
    </Page>
  );
};

export default App;
